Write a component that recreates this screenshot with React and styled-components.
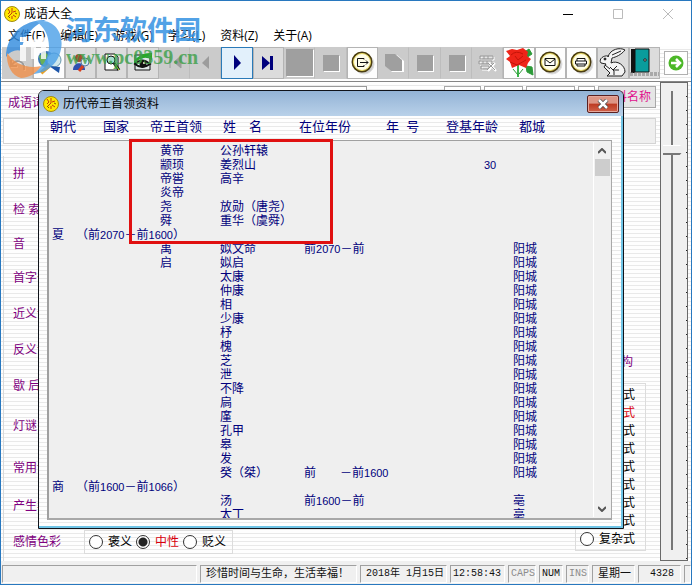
import React, { useState } from "react";
import styled, { createGlobalStyle, css } from "styled-components";

const cjk = `"Liberation Sans", "Noto Sans CJK SC", sans-serif`;
const navy = "#00007c";
const purple = "#800080";

const stripes = css`
  background: repeating-linear-gradient(#fefefe 0 3px, #e9e9e9 3px 4px);
`;

const GlobalStyle = createGlobalStyle`
  * {
    box-sizing: border-box;
  }
  body {
    margin: 0;
    font-family: ${cjk};
    font-size: 12px;
    line-height: 14px;
    color: #000;
  }
  button, input {
    font: inherit;
    margin: 0;
    padding: 0;
  }
`;

const Window = styled.div`
  position: relative;
  display: flex;
  flex-direction: column;
  min-height: 100vh;
  overflow: hidden;
  background: #fff;
  border: 1px solid #2878bf;
`;

const TitleBar = styled.header`
  display: flex;
  align-items: center;
  gap: 4px;
  height: 25px;
  padding-left: 3px;
`;

const AppTitle = styled.h1`
  flex: 1;
  margin: 0;
  font-size: 12px;
  font-weight: 400;
`;

const WindowButton = styled.button`
  display: flex;
  align-items: center;
  justify-content: center;
  width: 46px;
  height: 24px;
  border: 0;
  background: none;
  color: ${(p) => (p.$dim ? "#bbb" : "#000")};
`;

const MenuBar = styled.nav`
  display: flex;
  gap: 15px;
  height: 20px;
  padding: 2px 7px;
`;

const MenuItem = styled.button`
  border: 0;
  background: none;
  white-space: nowrap;
  font-family: "Open Sans", "Noto Sans CJK SC", sans-serif;
`;

const Toolbar = styled.div`
  display: flex;
  align-items: center;
  height: 36px;
  padding: 0 3px 2px 1px;
  border-bottom: 1px solid #858585;
  ${stripes}
`;

const toolTone = {
  flat: "background: #cbcbcb; border-color: #cbcbcb #bdbdbd #cbcbcb #cbcbcb;",
  white: "background: #fdfdfd; border-color: #b4b4b4;",
  raised: "background: #dcdcdc; border-color: #b4b4b4;",
  active: "background: #e2f0fb; border-color: #2a7ab8;",
};

const ToolButton = styled.button`
  flex: 1 1 0;
  display: flex;
  align-items: center;
  justify-content: center;
  height: 32px;
  min-width: 0;
  border: 1px solid;
  overflow: hidden;
  ${(p) => toolTone[p.$tone]}
`;

const GoButton = styled.button`
  display: flex;
  align-items: center;
  justify-content: center;
  width: 24px;
  height: 24px;
  margin-left: 4px;
  border: 1px solid #b0b0b0;
  background: #fff;
`;

const Workspace = styled.div`
  flex: 1;
  display: flex;
  padding: 0 3px 0 2px;
  ${stripes}
`;

const Form = styled.form`
  flex: 1;
  display: flex;
  flex-direction: column;
  min-width: 0;
`;

const TopRow = styled.div`
  display: flex;
  gap: 3px;
  height: 36px;
  padding: 4px 4px 10px 5px;
`;

const TopLabel = styled.label`
  width: 57px;
  padding-top: 10px;
  color: ${purple};
`;

const TextBox = styled.input`
  flex: 1;
  min-width: 0;
  margin-right: 74px;
  border: 1px solid #9a9a9a;
  background: #fff;
`;

const TopButton = styled.button`
  width: ${(p) => p.$width}px;
  border: 1px solid #a8a8a8;
  background: ${(p) => (p.$grey ? "#e6e6e6" : "#fff")};
  color: #e0118c;
  white-space: nowrap;
`;

const Banner = styled.div`
  display: flex;
  height: 26px;
  margin: 0 4px 12px 0;
  border: 1px solid #d4d4d4;
  background: linear-gradient(90deg, #fff 50%, #efefef 50%);
`;

const Columns = styled.div`
  flex: 1;
  display: flex;
  justify-content: space-between;
  border-left: 1px solid #dadada;
`;

const Fields = styled.div`
  display: flex;
  flex-direction: column;
`;

const Field = styled.div`
  display: flex;
  align-items: center;
  height: ${(p) => p.$height}px;
  padding-left: 9px;
  color: ${purple};
  white-space: pre;
`;

const FieldName = styled.span`
  width: 71px;
`;

const RadioBox = styled.fieldset`
  display: flex;
  flex-direction: ${(p) => (p.$stacked ? "column" : "row")};
  margin: 0;
  padding: ${(p) => (p.$stacked ? "2px 6px 2px 4px" : "2px 2px 2px 4px")};
  border: 1px solid #dcdcdc;
  color: #000;
`;

const RadioLabel = styled.label`
  display: flex;
  align-items: center;
  gap: 5px;
  height: 18px;
  margin-right: 4px;
  color: ${(p) => (p.$red ? "#d8000c" : "#000")};
`;

const Radio = styled.input`
  appearance: none;
  width: 14px;
  height: 14px;
  border: 1px solid #333;
  border-radius: 50%;
  background: #fff;
  &:checked {
    background: radial-gradient(circle, #222 0 4px, #fff 5px);
  }
`;

const Structure = styled.div`
  display: flex;
  flex-direction: column;
  align-self: flex-end;
  gap: 14px;
  margin: 0 14px 10px 0;
  color: ${purple};
`;

const StructureName = styled.span`
  padding-right: 13px;
  text-align: right;
`;

const SliderPanel = styled.div`
  display: flex;
  width: 28px;
  padding: 8px 0 10px 2px;
  border: 1px solid #6a6a6a;
  background:
    repeating-linear-gradient(transparent 0 13px, #222 13px 14px) right / 1px 100% no-repeat,
    #f0f0f0;
`;

const Slider = styled.input`
  appearance: none;
  contain: size;
  writing-mode: vertical-lr;
  align-self: stretch;
  width: 22px;
  min-height: 0;
  background: linear-gradient(#777, #777) 8px 0 / 2px 100% no-repeat;
  &::-webkit-slider-thumb {
    appearance: none;
    width: 22px;
    height: 10px;
    background: linear-gradient(#fff 0 1px, #eee 1px 8px, #777 8px);
    clip-path: polygon(0 0, 76% 0, 100% 40%, 76% 100%, 0 100%);
  }
`;

const StatusBar = styled.footer`
  display: flex;
  gap: 3px;
  height: 23px;
  padding: 4px 0 1px 1px;
  background: #f0f0f0;
  font-family: "Liberation Mono", "Noto Sans CJK SC", monospace;
  font-size: 10px;
`;

const StatusCell = styled.div`
  flex: ${(p) => (p.$grow ? "1" : "none")};
  width: ${(p) => p.$width}px;
  overflow: hidden;
  padding: 1px 0 0 ${(p) => (p.$tight ? 2 : 5)}px;
  border: 1px solid;
  border-color: #a0a0a0 #fff #fff #a0a0a0;
  color: ${(p) => (p.$dim ? "#8c8c8c" : "#111")};
  font-size: ${(p) => (p.$cjk ? 11 : 10)}px;
  white-space: pre;
`;

const Dialog = styled.section`
  position: absolute;
  top: 89px;
  left: 37px;
  right: 67px;
  border: 1px solid #10131a;
  border-radius: 6px 6px 0 0;
  box-shadow: inset -2px -2px 0 #6fc4e6;
  padding: 0 2px 8px 0;
  overflow: hidden;
  ${stripes}
`;

const DialogBar = styled.div`
  display: flex;
  align-items: center;
  gap: 4px;
  height: 25px;
  margin-right: -2px;
  padding: 0 4px;
  background: linear-gradient(#93b3d6, #b9d1e9);
`;

const DialogTitle = styled.h2`
  flex: 1;
  margin: 0;
  font-size: 12px;
  font-weight: 400;
`;

const CloseButton = styled.button`
  display: flex;
  align-items: center;
  justify-content: center;
  width: 32px;
  height: 18px;
  border: 1px solid #5a2020;
  border-radius: 2px;
  box-shadow: inset 0 0 0 1px #e6a89c;
  background: linear-gradient(#dd9585 0 45%, #bd3a22 50%, #d0624a);
`;

const TableArea = styled.div`
  position: relative;
  margin: 0 9px 0 8px;
`;

const Table = styled.table`
  display: block;
  color: ${navy};
  white-space: pre;
`;

const Head = styled.thead`
  display: block;
`;

const HeadRow = styled.tr`
  display: grid;
  grid-template-columns: 53px 47px 73px 76px 87px 60px 73px 1fr;
  height: 24px;
  padding: 4px 0 0 3px;
`;

const HeadCell = styled.th`
  padding: 0;
  font-size: 13px;
  font-weight: 400;
  text-align: left;
`;

const Body = styled.tbody`
  display: block;
  height: 380px;
  overflow-y: auto;
  scrollbar-width: none;
  padding-top: 3px;
  border: 2px solid;
  border-color: #a0a0a0 #a8a8a8 #a8a8a8 #a0a0a0;
  border-width: 1px 1px 2px 2px;
  background: #efefef;
`;

const Row = styled.tr`
  display: grid;
  grid-template-columns: 24px 84px 60px 84px 180px 29px 1fr;
  height: 14px;
  padding-left: 3px;
`;

const Cell = styled.td`
  min-width: 0;
  padding: 0;
`;

const Num = styled.span`
  font-size: 11px;
`;

const Scrollbar = styled.div`
  position: absolute;
  top: 26px;
  right: 2px;
  bottom: 3px;
  display: flex;
  flex-direction: column;
  align-items: center;
  width: 17px;
  border-left: 1px solid #fff;
  background: #f0f0f0;
`;

const ScrollButton = styled.button`
  display: flex;
  align-items: center;
  justify-content: center;
  width: 16px;
  height: 17px;
  border: 0;
  background: none;
`;

const ScrollThumb = styled.div`
  width: 15px;
  height: 17px;
  margin-bottom: auto;
  background: #cdcdcd;
`;

const RedFrame = styled.div`
  position: absolute;
  top: 23px;
  left: 82px;
  width: 204px;
  height: 105px;
  border: 3px solid #e01010;
`;

const Watermark = styled.div`
  position: absolute;
  top: 16px;
  left: 3px;
  display: flex;
  gap: 2px;
  pointer-events: none;
`;

const WatermarkText = styled.div`
  display: flex;
  flex-direction: column;
  font-weight: 700;
  white-space: nowrap;
`;

const SiteName = styled.span`
  color: #3492e2;
  font-size: 27px;
  line-height: 28px;
  opacity: 0.85;
`;

const SiteUrl = styled.span`
  color: #3da04a;
  font-family: "Liberation Serif", serif;
  font-size: 20px;
  line-height: 24px;
  opacity: 0.8;
`;

const CoinIcon = ({ size = 16 }) => (
  <svg width={size} height={size} viewBox="0 0 16 16">
    <circle cx="8" cy="8" r="7.5" fill="#ffe800" stroke="#a08a10" />
    <path d="M4 3l2 3-2 2M8 2v5l-3 3M9 6l3-1M9 9l3 2M8 10v3" fill="none" stroke="#c33a10" />
    <path d="M11 7l2 1M4 10l2 2" stroke="#806000" />
  </svg>
);

const icons = {
  undo: (
    <g fill="none" strokeWidth="2">
      <path d="M6 10v6h6M7 15c3-5 10-5 12 1v4" stroke="#fff" transform="translate(1 1)" />
      <path d="M6 10v6h6M7 15c3-5 10-5 12 1v4" stroke="#999" />
    </g>
  ),
  globe: (
    <g>
      <circle cx="10" cy="9" r="8" fill="#3c78b4" />
      <path d="M3 6l6-4 4 4-4 5 2 6-6-3z" fill="#68b058" />
      <circle cx="18" cy="10" r="7" fill="#cfe8ec" stroke="#6a98ac" />
      <path d="M14 15L5 23" stroke="#e8a028" strokeWidth="4" />
      <path d="M13 16L23 23l1-6" fill="#1c55a8" />
    </g>
  ),
  users: (
    <g>
      <circle cx="11" cy="8" r="4" fill="#a05030" />
      <path d="M5 20c0-9 12-9 12 0z" fill="#3050b0" />
      <circle cx="17" cy="12" r="4" fill="#d8ecf4" stroke="#5878a0" />
      <path d="M15 16l-4 5" stroke="#d84020" strokeWidth="3" />
    </g>
  ),
  find: (
    <g>
      <path d="M6 4h10l3 3v13H6z" fill="#fff" stroke="#111" />
      <circle cx="12" cy="10" r="4" fill="#a8e0d0" stroke="#111" />
      <path d="M15 13l5 7" stroke="#111" strokeWidth="3" />
      <path d="M16 14l4 6" stroke="#e8e030" />
    </g>
  ),
  eye: (
    <g>
      <path d="M5 5h15v15H5z" fill="#dfe8e8" stroke="#111" />
      <path d="M4 11Q11 2 22 3v7Q13 4 4 14z" fill="#28a828" />
      <path d="M5 14q7-7 15 0-8 6-15 0z" fill="#f4fbff" stroke="#111" strokeWidth="2" />
      <circle cx="13" cy="14" r="3.5" fill="#111" />
      <circle cx="14" cy="13" r="1" fill="#fff" />
    </g>
  ),
  first: <path d="M8 6v12M19 6v12l-7-6z" fill="#9c9c9c" stroke="#9c9c9c" />,
  prev: <path d="M16 6v13l-7-6z" fill="#9c9c9c" />,
  play: <path d="M10 5v15l7-7z" fill={navy} />,
  last: <path d="M6 6v14l8-7zM14 6h3v14h-3z" fill={navy} />,
  bigBlock: (
    <g>
      <path d="M0 0h27v27H0z" fill="#fff" />
      <path d="M-1-1h27v27H-1z" fill="#9f9f9f" />
    </g>
  ),
  block: (
    <g>
      <path d="M6 6h16v16H6z" fill="#fff" />
      <path d="M5 5h16v16H5z" fill="#9f9f9f" />
    </g>
  ),
  copy: (
    <g>
      <path d="M5 5h11l7 6v11H11l-5-5z" fill="#fff" />
      <path d="M4 4h10l7 6v11H10l-6-5z" fill="#9f9f9f" />
    </g>
  ),
  filterOff: (
    <g fill="none">
      <path d="M6 7h13v3H6zM5 12h13v3H5zM7 17h8v3H7z" stroke="#fff" />
      <path d="M5 6h13v3H5zM4 11h13v3H4zM6 16h8v3H6zM9 6v3M13 6v3M8 11v3M12 11v3" stroke="#999" />
      <path d="M14 13l7 8M20 13l-7 8" stroke="#fff" strokeWidth="2" />
      <path d="M13 13l7 7M19 13l-7 7" stroke="#999" />
    </g>
  ),
  exit: (
    <g fill="none" stroke="#111">
      <circle cx="14" cy="14" r="10" fill="#ccc" stroke="#ddd" />
      <circle cx="12" cy="12" r="9.5" fill="#fffde8" stroke="#4a3c10" strokeWidth="2" />
      <circle cx="12" cy="12" r="8.5" stroke="#e8d860" />
      <path d="M14 9.500V8.500H7.500v8H14v-1.500M10 12.500h8M16 10.500l2 2-2 2" />
    </g>
  ),
  mail: (
    <g fill="none" stroke="#111">
      <circle cx="14" cy="14" r="10" fill="#ccc" stroke="#ddd" />
      <circle cx="12" cy="12" r="9.500" fill="#fffde8" stroke="#4a3c10" strokeWidth="2" />
      <circle cx="12" cy="12" r="8.500" stroke="#e8d860" />
      <path d="M7 8.500h10v7H7zM7 9l5 4 5-4" fill="#fff" />
    </g>
  ),
  print: (
    <g fill="none" stroke="#111">
      <circle cx="14" cy="14" r="10" fill="#ccc" stroke="#ddd" />
      <circle cx="12" cy="12" r="9.500" fill="#fffde8" stroke="#4a3c10" strokeWidth="2" />
      <circle cx="12" cy="12" r="8.500" stroke="#e8d860" />
      <path d="M8 11V8.500h8V11M6.500 11h11v3h-11zM8 14v2h8v-2" fill="#fff" />
    </g>
  ),
  rose: (
    <g>
      <path d="M12 15v12" stroke="#3cb44a" strokeWidth="2" />
      <path d="M12 25l-5-6M13 24l4-5M17 3l6-4 3 5-6 4zM20 16l6 1 1 8-6-3z" fill="#2c9a38" stroke="#2c9a38" />
      <path d="M0 1l6-2 5 1 6-2 5 4-1 4 4 3-3 4-2 5-7-3-7 3-2-6-4-3 4-3z" fill="#ee2418" />
      <path d="M5 5q5-5 12-1M4 12l7 3 9-5M9 6l3 4 5-4" fill="none" stroke="#c41408" />
    </g>
  ),
  rabbit: (
    <g fill="#f4f4f4" stroke="#222">
      <path d="M8 7C10-1 20-3 25 0 21 5 16 7 12 8l-1 5c6-3 14 2 14 9l-3 4H7l3-3-6-6 2-3-5-1c-3-4 3-8 7-7z" />
      <path d="M12 5l9-4M10 17l4 4v4M17 16l-4 4h6M5 15l5 4" fill="none" />
      <circle cx="5" cy="9" r="1" fill="#111" />
    </g>
  ),
  door: (
    <g>
      <path d="M-1-1h4v24h-4z" fill="#111" />
      <path d="M3-1h14v23H3z" fill="#0a9c9c" stroke="#111" />
      <circle cx="13" cy="10" r="1.200" fill="#fff" stroke="#111" />
      <path d="M-2 23h29M-2 25h29" stroke="#777" strokeDasharray="3 1" />
    </g>
  ),
};

const Icon = ({ name }) => (
  <svg width="25" height="25" viewBox="0 0 25 25" overflow="visible">
    {icons[name]}
  </svg>
);

const tools = [
  ["undo", "flat", "撤消"],
  ["globe", "white", "浏览"],
  ["users", "raised", "人物"],
  ["find", "raised", "查找"],
  ["eye", "raised", "查看"],
  ["first", "flat", "首条"],
  ["prev", "flat", "上一条"],
  ["play", "active", "下一条"],
  ["last", "raised", "末条"],
  ["bigBlock", "flat", "保存"],
  ["block", "flat", "新增"],
  ["exit", "white", "导出"],
  ["copy", "flat", "复制"],
  ["block", "flat", "粘贴"],
  ["block", "flat", "剪切"],
  ["filterOff", "flat", "取消筛选"],
  ["rose", "white", "祝福"],
  ["mail", "white", "邮件"],
  ["print", "white", "打印"],
  ["rabbit", "raised", "游戏"],
  ["door", "raised", "退出"],
];

const menus = ["文件(F)", "编辑(E)", "游戏(G)", "学习(L)", "资料(Z)", "关于(A)"];

const fields = [
  ["拼    音", 36],
  ["检 索", 36],
  ["音", 32],
  ["首字母", 36],
  ["近义词", 36],
  ["反义词", 36],
  ["歇 后", 36],
  ["灯谜", 44],
  ["常用语", 40],
  ["产生年", 36],
];

const structures = ["主谓式", "动宾式", "联结式", "偏正式", "连动式", "补充式", "紧缩式", "复句式", "复杂式"];

const heads = ["朝代", "国家", "帝王首领", "姓　名", "在位年份", "年  号", "登基年龄", "都城"];

const xia = (name, reign = "", ruler = "") => ["", "", ruler, name, reign, "", "阳城"];

// 朝代, 起止, 帝王首领, 姓名, 在位年份, 登基年龄, 都城
const rulers = [
  ["", "", "黄帝", "公孙轩辕", "", "", ""],
  ["", "", "颛顼", "姜烈山", "", "30", ""],
  ["", "", "帝喾", "高辛", "", "", ""],
  ["", "", "炎帝", "", "", "", ""],
  ["", "", "尧", "放勋（唐尧）", "", "", ""],
  ["", "", "舜", "重华（虞舜）", "", "", ""],
  ["夏", "（前2070－前1600）", "", "", "", "", ""],
  xia("姒文命", "前2070－前", "禹"),
  xia("姒启", "", "启"),
  xia("太康"),
  xia("仲康"),
  xia("相"),
  xia("少康"),
  xia("杼"),
  xia("槐"),
  xia("芝"),
  xia("泄"),
  xia("不降"),
  xia("扃"),
  xia("廑"),
  xia("孔甲"),
  xia("皋"),
  xia("发"),
  xia("癸（桀）", "前　　－前1600"),
  ["商", "（前1600－前1066）", "", "", "", "", ""],
  ["", "", "", "汤", "前1600－前", "", "亳"],
  ["", "", "", "太丁", "", "", "亳"],
];

const withDigits = (text) =>
  text.split(/(\d+)/).map((part, i) => (/\d/.test(part) ? <Num key={i}>{part}</Num> : part));

const RadioGroup = ({ name, options, value, onChange, red, stacked }) => (
  <RadioBox $stacked={stacked}>
    {options.map((option) => (
      <RadioLabel key={option} $red={option === red}>
        <Radio
          type="radio"
          name={name}
          checked={value === option}
          onChange={() => onChange(option)}
        />
        {option}
      </RadioLabel>
    ))}
  </RadioBox>
);

const RulersDialog = () => (
  <Dialog>
    <DialogBar>
      <CoinIcon />
      <DialogTitle>历代帝王首领资料</DialogTitle>
      <CloseButton aria-label="关闭">
        <svg width="12" height="10" viewBox="0 0 12 10">
          <path d="M2 1l8 8M10 1L2 9" stroke="#444" strokeWidth="4" />
          <path d="M2 1l8 8M10 1L2 9" stroke="#fff" strokeWidth="2.500" />
        </svg>
      </CloseButton>
    </DialogBar>
    <TableArea>
      <Table>
        <Head>
          <HeadRow>
            {heads.map((head) => (
              <HeadCell key={head}>{head}</HeadCell>
            ))}
          </HeadRow>
        </Head>
        <Body>
          {rulers.map((ruler, idx) => (
            <Row key={idx}>
              {ruler.map((text, i) => (
                <Cell key={i}>{withDigits(text)}</Cell>
              ))}
            </Row>
          ))}
        </Body>
      </Table>
      <Scrollbar>
        <ScrollButton aria-label="向上">
          <svg width="8" height="6" viewBox="0 0 8 6">
            <path d="M0 5l4-4 4 4" fill="none" stroke="#555" strokeWidth="2" />
          </svg>
        </ScrollButton>
        <ScrollThumb />
        <ScrollButton aria-label="向下">
          <svg width="8" height="6" viewBox="0 0 8 6">
            <path d="M0 1l4 4 4-4" fill="none" stroke="#555" strokeWidth="2" />
          </svg>
        </ScrollButton>
      </Scrollbar>
      <RedFrame />
    </TableArea>
  </Dialog>
);

const SiteWatermark = () => (
  <Watermark>
    <svg width="60" height="64" viewBox="0 0 60 64">
      <g opacity="0.8">
        <path d="M2 40C2 16 22 2 42 3 30 8 18 20 18 34 12 32 6 34 2 40z" fill="#2f8ade" />
        <path d="M32 4c20-3 28 14 25 28-3 16-16 25-29 25 10-6 17-16 17-27 0-12-5-20-13-26z" fill="#4aa0e8" />
        <path d="M3 36c8 12 22 16 34 13-4 7-12 12-20 12C8 59 2 48 3 36z" fill="#f0904a" />
        <path d="M16 20h6v5h-6zM16 28h6v16h-6zM27 23l15-3v22h-5V27h-5v15h-5z" fill="#fff" />
      </g>
    </svg>
    <WatermarkText>
      <SiteName>河东软件园</SiteName>
      <SiteUrl>www.pc0359.cn</SiteUrl>
    </WatermarkText>
  </Watermark>
);

const App = () => {
  const [mood, setMood] = useState("中性");
  const [structure, setStructure] = useState("动宾式");
  const [position, setPosition] = useState(12);

  return (
    <>
      <GlobalStyle />
      <Window>
        <TitleBar>
          <CoinIcon />
          <AppTitle>成语大全</AppTitle>
          <WindowButton aria-label="最小化">
            <svg width="10" height="10">
              <path d="M0 5.500h10" stroke="currentColor" />
            </svg>
          </WindowButton>
          <WindowButton aria-label="最大化" $dim>
            <svg width="10" height="10">
              <path d="M.5.5h9v9h-9z" fill="none" stroke="currentColor" />
            </svg>
          </WindowButton>
          <WindowButton aria-label="关闭" $dim>
            <svg width="10" height="10">
              <path d="M0 0l10 10M10 0L0 10" stroke="currentColor" />
            </svg>
          </WindowButton>
        </TitleBar>
        <MenuBar>
          {menus.map((menu) => (
            <MenuItem key={menu}>{menu}</MenuItem>
          ))}
        </MenuBar>
        <Toolbar>
          {tools.map(([icon, tone, label], idx) => (
            <ToolButton key={idx} $tone={tone} aria-label={label}>
              <Icon name={icon} />
            </ToolButton>
          ))}
          <GoButton aria-label="前进">
            <svg width="16" height="16" viewBox="0 0 16 16">
              <circle cx="8" cy="8" r="7.500" fill="#4cb828" />
              <path d="M3 8h9M8 4l4 4-4 4" fill="none" stroke="#fff" strokeWidth="2.500" />
            </svg>
          </GoButton>
        </Toolbar>
        <Workspace>
          <Form>
            <TopRow>
              <TopLabel htmlFor="idiom">成语词条</TopLabel>
              <TextBox id="idiom" />
              <TopButton type="button" $width={37} aria-label="查词" />
              <TopButton type="button" $width={39} aria-label="查义" />
              <TopButton type="button" $width={49} aria-label="查源" />
              <TopButton type="button" $width={17} aria-label="更多" />
              <TopButton type="button" $width={58} $grey>
                资料名称
              </TopButton>
            </TopRow>
            <Banner />
            <Columns>
              <Fields>
                {fields.map(([name, height]) => (
                  <Field key={name} $height={height}>
                    <FieldName>{name}</FieldName>
                  </Field>
                ))}
                <Field $height={36}>
                  <FieldName>感情色彩</FieldName>
                  <RadioGroup
                    name="mood"
                    options={["褒义", "中性", "贬义"]}
                    value={mood}
                    onChange={setMood}
                    red="中性"
                  />
                </Field>
              </Fields>
              <Structure>
                <StructureName>结构</StructureName>
                <RadioGroup
                  name="structure"
                  options={structures}
                  value={structure}
                  onChange={setStructure}
                  red="动宾式"
                  stacked
                />
              </Structure>
            </Columns>
          </Form>
          <SliderPanel>
            <Slider
              type="range"
              aria-label="位置"
              value={position}
              onChange={(e) => setPosition(Number(e.target.value))}
            />
          </SliderPanel>
        </Workspace>
        <StatusBar>
          <StatusCell $grow />
          <StatusCell $width={157} $cjk>
            珍惜时间与生命，生活幸福！
          </StatusCell>
          <StatusCell $width={87}>2018年 1月15日</StatusCell>
          <StatusCell $width={55} $tight>12:58:43</StatusCell>
          <StatusCell $width={28} $dim $tight>
            CAPS
          </StatusCell>
          <StatusCell $width={24} $tight>NUM</StatusCell>
          <StatusCell $width={23} $dim $tight>
            INS
          </StatusCell>
          <StatusCell $width={43} $cjk>
            星期一
          </StatusCell>
          <StatusCell $width={43}> 4328</StatusCell>
          <StatusCell $width={4} />
        </StatusBar>
        <RulersDialog />
        <SiteWatermark />
      </Window>
    </>
  );
};

export default App;
